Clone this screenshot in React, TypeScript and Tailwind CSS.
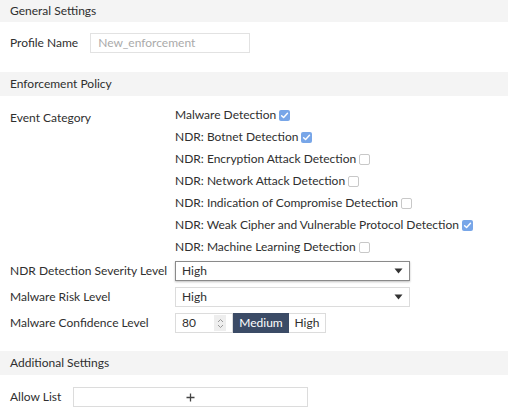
import React from 'react';

const categories: { label: string; checked: boolean }[] = [
  { label: 'Malware Detection', checked: true },
  { label: 'NDR: Botnet Detection', checked: true },
  { label: 'NDR: Encryption Attack Detection', checked: false },
  { label: 'NDR: Network Attack Detection', checked: false },
  { label: 'NDR: Indication of Compromise Detection', checked: false },
  { label: 'NDR: Weak Cipher and Vulnerable Protocol Detection', checked: true },
  { label: 'NDR: Machine Learning Detection', checked: false },
];

const SectionHeader: React.FC<{ title: string; className?: string }> = ({ title, className = 'h-6' }) => (
  <div className={`${className} bg-[#f4f4f4] flex items-center px-[10px] text-[12px] text-[#2f2f2f]`}>{title}</div>
);

const Check: React.FC<{ checked: boolean }> = ({ checked }) =>
  checked ? (
    <span className="inline-flex shrink-0 w-[11px] h-[11px] rounded-[2px] bg-[#78a6e8] items-center justify-center ml-[3px]">
      <svg width="9" height="9" viewBox="0 0 10 10" fill="none">
        <path d="M1.8 5.2 L4 7.3 L8.3 2.6" stroke="white" strokeWidth="1.6" strokeLinecap="round" strokeLinejoin="round" />
      </svg>
    </span>
  ) : (
    <span className="inline-block shrink-0 w-[11px] h-[11px] rounded-[2px] border border-[#c8c8c8] bg-white ml-[3px]" />
  );

const Caret = () => (
  <svg width="9" height="6" viewBox="0 0 9 6" className="mr-[6px]">
    <path d="M0.5 0.5 H8.5 L4.5 5.5 Z" fill="#333" />
  </svg>
);

const Select: React.FC<{ value: string; focused?: boolean }> = ({ value, focused }) => (
  <div
    className={`w-[235px] h-[20px] flex items-center justify-between pl-[6px] bg-white border ${
      focused ? 'border-[#8a8a8a] shadow-[0_1px_2px_rgba(0,0,0,0.25)]' : 'border-[#dcdcdc]'
    }`}
  >
    <span>{value}</span>
    <Caret />
  </div>
);

export default function App() {
  return (
    <div className="w-[508px] h-[418px] bg-white text-[12px] text-[#2f2f2f] overflow-hidden whitespace-nowrap" style={{ fontFamily: 'Lato, "Open Sans", sans-serif' }}>
      <SectionHeader title="General Settings" className="h-[22px]" />
      <div className="flex items-center gap-[12px] px-[10px] pt-[11px] pb-[19px]">
        <span>Profile Name</span>
        <div className="w-[160px] h-[20px] border border-[#e2e2e2] flex items-center px-[7px] text-[#aaa]">New_enforcement</div>
      </div>

      <SectionHeader title="Enforcement Policy" />
      <div className="grid grid-cols-[165px_1fr] px-[10px] pt-[8px]">
        <div className="pt-[3px] leading-[22px]">Event Category</div>
        <div className="flex flex-col">
          {categories.map((c) => (
            <div key={c.label} className="h-[22px] flex items-center">
              <span>{c.label}</span>
              <Check checked={c.checked} />
            </div>
          ))}
        </div>
      </div>
      <div className="grid grid-cols-[165px_1fr] px-[10px] pt-[3px] gap-y-[6px]">
        <div className="h-[20px] flex items-center">NDR Detection Severity Level</div>
        <Select value="High" focused />
        <div className="h-[20px] flex items-center">Malware Risk Level</div>
        <Select value="High" />
        <div className="h-[20px] flex items-center">Malware Confidence Level</div>
        <div className="flex h-[20px]">
          <div className="w-[58px] border border-[#dcdcdc] flex items-center justify-between pl-[6px] pr-[6px]">
            <span>80</span>
            <span className="w-[12px] h-[16px] bg-[#eee] flex items-center justify-center">
              <svg width="7" height="11" viewBox="0 0 7 11" fill="none">
                <path d="M1 4 L3.5 1.5 L6 4" stroke="#999" strokeWidth="1" />
                <path d="M1 7 L3.5 9.5 L6 7" stroke="#999" strokeWidth="1" />
              </svg>
            </span>
          </div>
          <div className="w-[56px] bg-[#3b4b66] text-white flex items-center justify-center">Medium</div>
          <div className="w-[37px] border border-l-0 border-[#dcdcdc] flex items-center justify-center">High</div>
        </div>
      </div>

      <div className="h-[18px]" />
      <SectionHeader title="Additional Settings" />
      <div className="flex items-center gap-[12px] px-[10px] pt-[12px]">
        <span>Allow List</span>
        <div className="w-[235px] h-[20px] border border-[#dcdcdc] flex items-center justify-center">
          <svg width="9" height="9" viewBox="0 0 9 9">
            <path d="M4.5 0.5 V8.5 M0.5 4.5 H8.5" stroke="#444" strokeWidth="1.3" />
          </svg>
        </div>
      </div>
    </div>
  );
}
